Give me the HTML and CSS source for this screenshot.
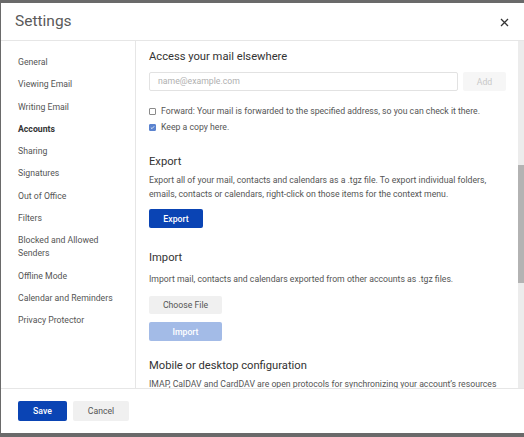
FILE: index.html
```html
<!DOCTYPE html>
<html>
<head>
<meta charset="utf-8">
<link rel="stylesheet" href="styles.css">
</head>
<body>
<div class="backdrop">
  <div class="dialog">
    <div class="header">
      <div class="title">Settings</div>
      <div class="close">
        <svg width="9" height="9" viewBox="0 0 9 9"><path d="M1 1L8 8M8 1L1 8" stroke="#333" stroke-width="1.3" fill="none"/></svg>
      </div>
    </div>
    <div class="body">
      <nav class="sidebar">
        <div class="nav-item">General</div>
        <div class="nav-item">Viewing Email</div>
        <div class="nav-item">Writing Email</div>
        <div class="nav-item active">Accounts</div>
        <div class="nav-item">Sharing</div>
        <div class="nav-item">Signatures</div>
        <div class="nav-item">Out of Office</div>
        <div class="nav-item">Filters</div>
        <div class="nav-item">Blocked and Allowed<br>Senders</div>
        <div class="nav-item">Offline Mode</div>
        <div class="nav-item">Calendar and Reminders</div>
        <div class="nav-item">Privacy Protector</div>
      </nav>
      <main class="content">
        <section class="section">
          <h2 class="heading">Access your mail elsewhere</h2>
          <div class="input-row">
            <div class="input">name@example.com</div>
            <div class="btn btn-disabled-gray">Add</div>
          </div>
          <label class="check-row"><span class="box"></span>Forward: Your mail is forwarded to the specified address, so you can check it there.</label>
          <label class="check-row"><span class="box checked"><svg width="7" height="7" viewBox="0 0 7 7"><path d="M1.2 3.6L2.8 5.1L5.8 1.8" stroke="#fff" stroke-width="1.1" fill="none"/></svg></span>Keep a copy here.</label>
        </section>
        <section class="section">
          <h2 class="heading">Export</h2>
          <p class="text">Export all of your mail, contacts and calendars as a .tgz file. To export individual folders, emails, contacts or calendars, right-click on those items for the context menu.</p>
          <div class="btn btn-primary btn-export">Export</div>
        </section>
        <section class="section">
          <h2 class="heading heading-import">Import</h2>
          <p class="text">Import mail, contacts and calendars exported from other accounts as .tgz files.</p>
          <div class="btn btn-gray btn-wide">Choose File</div>
          <div class="btn btn-light-blue btn-wide">Import</div>
        </section>
        <section class="section">
          <h2 class="heading">Mobile or desktop configuration</h2>
          <p class="text">IMAP, CalDAV and CardDAV are open protocols for synchronizing your account’s resources</p>
        </section>
      </main>
      <div class="scrollbar"><div class="thumb"></div></div>
    </div>
    <div class="footer">
      <div class="btn btn-primary btn-save">Save</div>
      <div class="btn btn-gray btn-cancel">Cancel</div>
    </div>
  </div>
</div>
</body>
</html>
```
FILE: styles.css
```css
* { box-sizing: border-box; }
html, body { margin: 0; padding: 0; }
body {
  width: 524px;
  height: 437px;
  overflow: hidden;
  background: #6a6a6a;
  font-family: Roboto, "Liberation Sans", sans-serif;
}
.backdrop {
  padding: 3px 0 4px 1px;
  height: 437px;
}
.dialog {
  background: #fff;
  height: 430px;
  display: flex;
  flex-direction: column;
}
.header {
  height: 38px;
  border-bottom: 1px solid #e6e6e6;
  display: flex;
  align-items: center;
  justify-content: space-between;
  padding: 0 15px 0 14px;
  flex: none;
}
.title {
  font-size: 15.5px;
  color: #5a5a5a;
  font-weight: 400;
  margin-top: -1px;
}
.close {
  width: 9px;
  height: 9px;
  display: flex;
  margin-top: 2px;
}
.body {
  flex: 1;
  display: flex;
  min-height: 0;
  border-bottom: 1px solid #e6e6e6;
}
.sidebar {
  width: 135px;
  flex: none;
  border-right: 1px solid #e6e6e6;
  padding: 15px 0 0 17px;
}
.nav-item {
  font-size: 8.7px;
  color: #555;
  line-height: 13px;
  margin-bottom: 9.3px;
}
.nav-item.active {
  font-weight: 700;
  color: #333;
}
.content {
  flex: 1;
  overflow: hidden;
  padding: 9px 12px 0 13px;
}
.scrollbar {
  width: 6px;
  flex: none;
  background: #ececec;
  padding-top: 124px;
}
.thumb {
  height: 118px;
  background: #b3b3b3;
}
.section { margin-bottom: 21px; }
.heading {
  margin: 0 0 4px 0;
  font-size: 11.2px;
  font-weight: 400;
  color: #333;
  line-height: 14px;
}
.heading-import { margin-bottom: 7px; }
.input-row {
  display: flex;
  gap: 5px;
  margin: 8px 0 14px 0;
}
.input {
  flex: 1;
  height: 19px;
  border: 1px solid #e2e2e2;
  border-radius: 2px;
  font-size: 8.7px;
  color: #b0b0b0;
  padding: 0 8px;
  line-height: 17px;
}
.check-row {
  display: flex;
  align-items: center;
  font-size: 8.7px;
  color: #555;
  line-height: 13px;
  margin-bottom: 3px;
}
.box {
  width: 7px;
  height: 7px;
  border: 1px solid #8a8a8a;
  border-radius: 1px;
  margin-right: 5px;
  display: flex;
  align-items: center;
  justify-content: center;
  flex: none;
}
.box.checked {
  background: #5b83cf;
  border-color: #5b83cf;
}
.text {
  margin: 0 0 8px 0;
  font-size: 8.7px;
  color: #555;
  line-height: 14px;
}
.btn {
  height: 19px;
  border-radius: 2px;
  font-size: 8.7px;
  display: flex;
  align-items: center;
  justify-content: center;
}
.btn-disabled-gray {
  width: 43px;
  background: #f6f6f6;
  color: #c8c8c8;
}
.btn-primary {
  background: #0a44b4;
  color: #fff;
  font-weight: 500;
}
.btn-export { width: 54px; margin-bottom: 23px; }
.btn-gray {
  background: #f0f0f0;
  color: #555;
}
.btn-light-blue {
  background: #a3bbe7;
  color: #fff;
  font-weight: 500;
}
.btn-wide { width: 73px; margin-top: 10px; height: 18px; }
.btn-wide + .btn-wide { margin-top: 8px; height: 19px; margin-bottom: 18px; }
.section:has(.btn-export), .section:has(.btn-wide) { margin-bottom: 0; }
.footer {
  flex: none;
  height: 44px;
  display: flex;
  align-items: center;
  gap: 6px;
  padding: 0 0 0 17px;
}
.btn-save { width: 49px; height: 20px; }
.btn-cancel { width: 56px; height: 20px; }
```
